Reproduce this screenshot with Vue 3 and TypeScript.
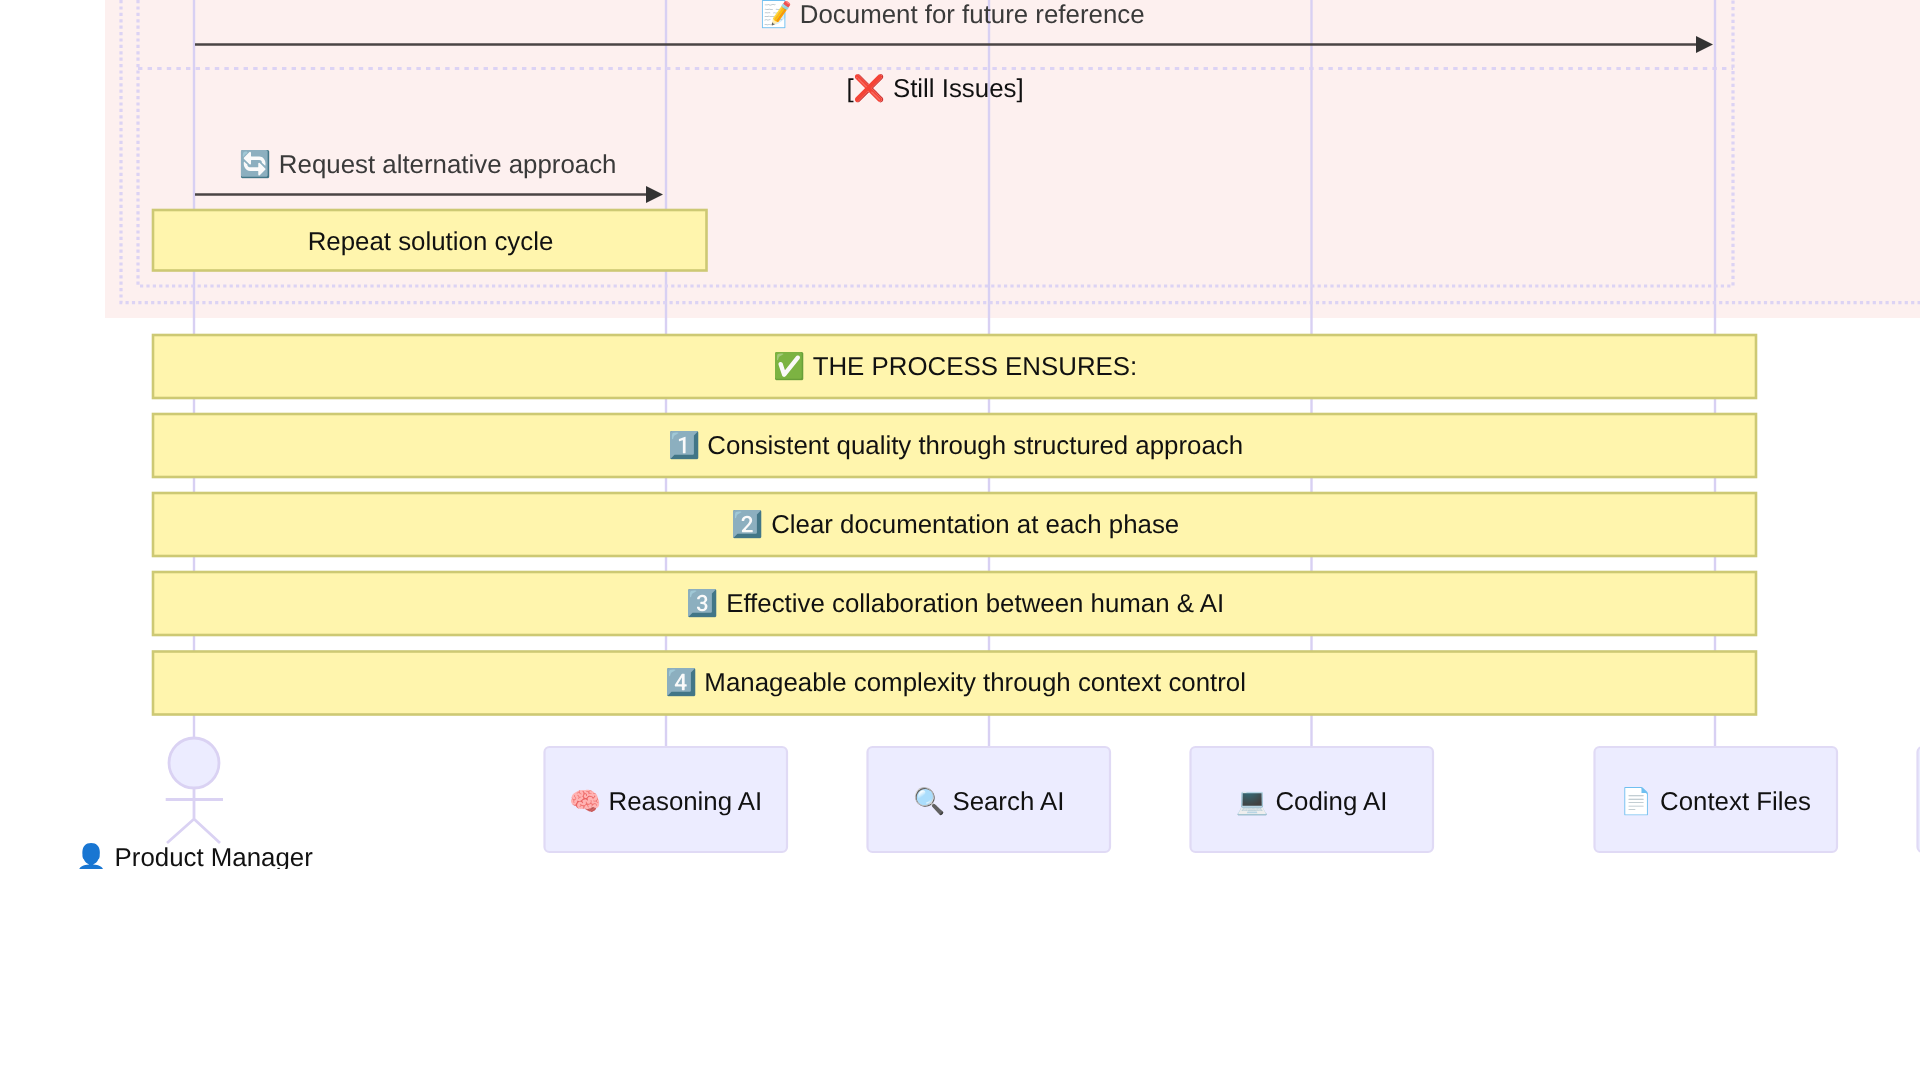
<script setup lang="ts">
interface Note { x: number; y: number; w: number; h: number; dy: number; cx: number; label: string }
interface Actor { x: number; w: number; label: string }

const lifelines: number[] = [194, 666, 989, 1311.5, 1715]

const notes: Note[] = [
  { x: 153, y: 210, w: 553.5, h: 60.5, dy: 10, cx: 430.5, label: 'Repeat solution cycle' },
  { x: 153, y: 335, w: 1603, h: 63, dy: 8, cx: 955.5, label: '✅ THE PROCESS ENSURES:' },
  { x: 153, y: 414, w: 1603, h: 63, dy: 8, cx: 955.5, label: '1️⃣ Consistent quality through structured approach' },
  { x: 153, y: 493, w: 1603, h: 63, dy: 8, cx: 955.5, label: '2️⃣ Clear documentation at each phase' },
  { x: 153, y: 572, w: 1603, h: 63, dy: 8.5, cx: 955.5, label: '3️⃣ Effective collaboration between human & AI' },
  { x: 153, y: 651.5, w: 1603, h: 63, dy: 8, cx: 955.5, label: '4️⃣ Manageable complexity through context control' },
]

const actors: Actor[] = [
  { x: 544.5, w: 242.5, label: '🧠 Reasoning AI' },
  { x: 867.5, w: 242.5, label: '🔍 Search AI' },
  { x: 1190.5, w: 242.5, label: '💻 Coding AI' },
  { x: 1594.5, w: 242.5, label: '📄 Context Files' },
]
</script>

<template>
  <svg class="canvas" width="1920" height="1080" viewBox="0 0 1920 1080">
    <rect x="105" y="0" width="1815" height="318" fill="#fdf0ef" />
    <line v-for="x in lifelines" :key="x" :x1="x" :x2="x" y1="0" y2="750" class="life" />
    <path d="M121 0V302.7H1920" class="dots" />
    <path d="M138 0V286H1733V0" class="dots" />
    <path d="M138 68.5H1733" class="dots wide" />
    <line x1="195" x2="1698" y1="44.5" y2="44.5" class="msg" />
    <path d="M1696 36L1713 44.5L1696 53Z" class="head" />
    <line x1="195" x2="648" y1="194.5" y2="194.5" class="msg" />
    <path d="M646 186L663 194.5L646 203Z" class="head" />
    <text x="952.5" y="23" class="label muted">📝 Document for future reference</text>
    <text x="935" y="97" class="label dark">[❌ Still Issues]</text>
    <text x="428" y="173" class="label muted">🔄 Request alternative approach</text>
    <template v-for="n in notes" :key="n.y">
      <rect :x="n.x" :y="n.y" :width="n.w" :height="n.h" class="note" />
      <text :x="n.cx" :y="n.y + n.h / 2 + n.dy" class="label dark">{{ n.label }}</text>
    </template>
    <template v-for="a in actors" :key="a.x">
      <rect :x="a.x" y="747" :width="a.w" height="105" rx="5" class="actor" />
      <text :x="a.x + a.w / 2" y="810" class="label dark">{{ a.label }}</text>
    </template>
    <rect x="1917.5" y="747" width="20" height="105" rx="5" class="actor" />
    <circle cx="194" cy="763" r="25" class="figure" />
    <path d="M194 788V819M165.7 799.5H223M194 819L167 843M194 819L220 843" class="stick" />
    <svg x="60" y="840" width="280" height="29">
      <text x="134" y="26" class="label dark">👤 Product Manager</text>
    </svg>
  </svg>
</template>

<style scoped>
.canvas { display: block; filter: blur(0.5px); }
.label { font-family: "Liberation Sans", Arial, sans-serif; font-size: 25.85px; text-anchor: middle; text-rendering: geometricPrecision; }
.muted { fill: #3a3a3a; }
.dark { fill: #111; }
.life { stroke: #d8d0f3; stroke-width: 2.4; }
.dots { fill: none; stroke: #dcd3f4; stroke-width: 3.2; stroke-dasharray: 3.2 3.2; }
.wide { stroke-dasharray: 4.4 5.2; }
.msg { stroke: #4a4545; stroke-width: 2.6; }
.head { fill: #333; }
.note { fill: #fff5ad; stroke: #cdc974; stroke-width: 2.6; }
.actor { fill: #ececff; stroke: #e0daf5; stroke-width: 2.2; }
.figure { fill: #ececff; stroke: #dad2f3; stroke-width: 2.8; }
.stick { fill: none; stroke: #dad2f3; stroke-width: 2.8; }
</style>

<style>
body { background: #fff; overflow: hidden; }
</style>
